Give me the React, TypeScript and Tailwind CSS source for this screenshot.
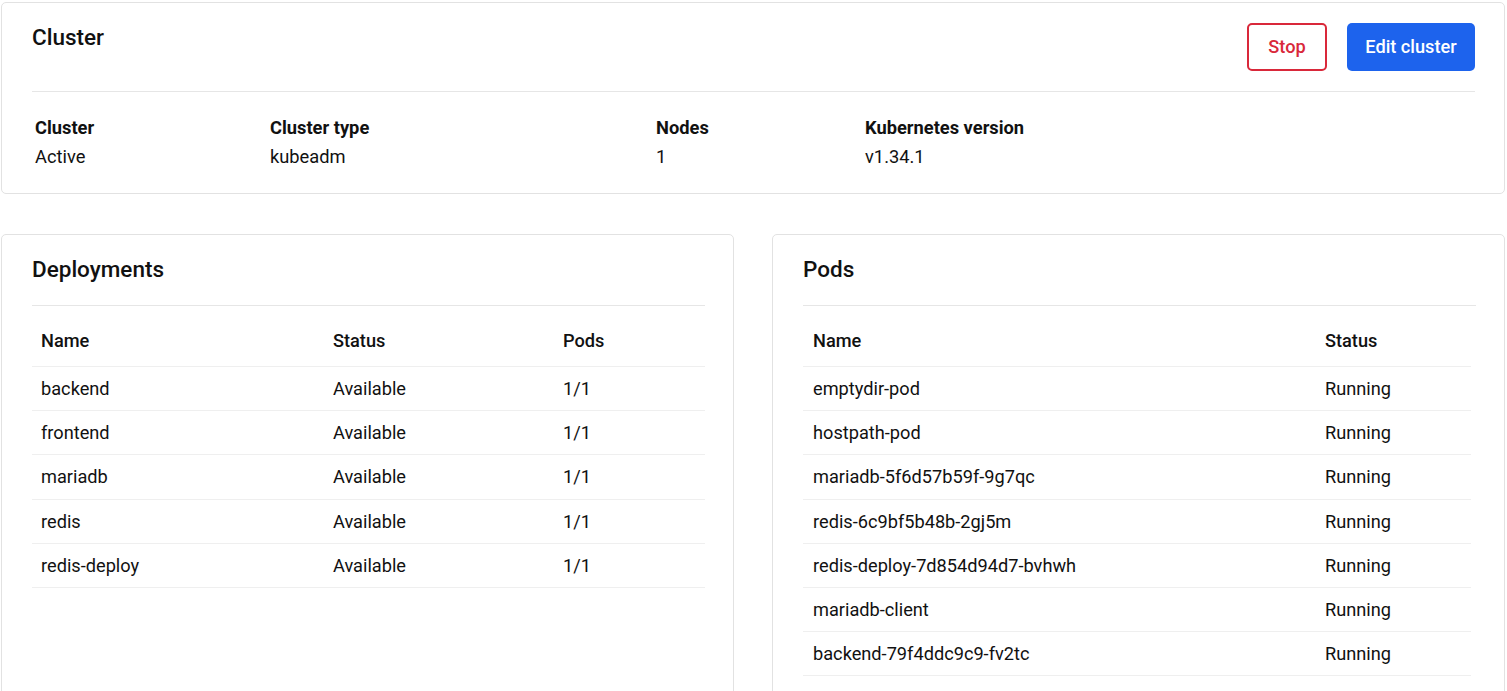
import React from "react";

const deployments = [
  ["backend", "Available", "1/1"],
  ["frontend", "Available", "1/1"],
  ["mariadb", "Available", "1/1"],
  ["redis", "Available", "1/1"],
  ["redis-deploy", "Available", "1/1"],
];

const pods = [
  "emptydir-pod",
  "hostpath-pod",
  "mariadb-5f6d57b59f-9g7qc",
  "redis-6c9bf5b48b-2gj5m",
  "redis-deploy-7d854d94d7-bvhwh",
  "mariadb-client",
  "backend-79f4ddc9c9-fv2tc",
];

export default function App() {
  return (
    <div
      className="h-[691px] w-[1507px] overflow-hidden bg-white text-[#111] pl-px pt-[2px]"
      style={{ fontFamily: "Roboto, 'Noto Sans', Arial, sans-serif" }}
    >
      <div className="w-[1504px] flex flex-col">
        {/* Cluster card */}
        <div className="border border-[#e2e2e2] rounded-[5px] pl-[30px] pr-[29px]">
          <div className="flex justify-between items-start pt-[20px] pb-[20px] border-b border-[#e6e6e6]">
            <h1 className="text-[22.5px] leading-[30px] font-medium -mt-px">Cluster</h1>
            <div className="flex gap-[20px]">
              <button className="h-[48px] w-[80px] pb-[1px] rounded-[5px] border-2 border-[#d9283a] text-[#d9283a] text-[18.2px] font-medium bg-white">
                Stop
              </button>
              <button className="h-[48px] w-[128px] pb-[1px] rounded-[5px] bg-[#1d63ed] text-white text-[18.2px] font-medium">
                Edit cluster
              </button>
            </div>
          </div>
          <div className="grid grid-cols-[235px_386px_209px_1fr] pt-[22px] pb-[22px] text-[18.3px] leading-[28px]">
            {[
              ["Cluster", "Active"],
              ["Cluster type", "kubeadm"],
              ["Nodes", "1"],
              ["Kubernetes version", "v1.34.1"],
            ].map(([k, v]) => (
              <div key={k} className="pl-[3px] flex flex-col">
                <span className="font-bold">{k}</span>
                <span className="mt-[1px]">{v}</span>
              </div>
            ))}
          </div>
        </div>

        {/* Bottom cards */}
        <div className="grid grid-cols-[733px_733px] gap-[38px] mt-[40px]">
          <div className="border border-[#e2e2e2] rounded-[5px] pl-[30px] pr-[28px] pb-[30px] h-[480px]">
            <div className="pt-[19px] pb-[21px] border-b border-[#e6e6e6]">
              <h2 className="text-[22.5px] leading-[30px] font-medium">Deployments</h2>
            </div>
            <div className="text-[18.2px] leading-[27.15px]">
              <div className="grid grid-cols-[291px_230px_1fr] font-medium pt-[21px] pb-[12px] border-b border-[#efefef]">
                <div className="pl-[9px]">Name</div>
                <div className="pl-[10px]">Status</div>
                <div className="pl-[10px]">Pods</div>
              </div>
              {deployments.map(([n, s, p]) => (
                <div key={n} className="grid grid-cols-[291px_230px_1fr] pt-[8px] pb-[8px] border-b border-[#efefef]">
                  <div className="pl-[9px]">{n}</div>
                  <div className="pl-[10px]">{s}</div>
                  <div className="pl-[10px]">{p}</div>
                </div>
              ))}
            </div>
          </div>

          <div className="border border-[#e2e2e2] rounded-[5px] pl-[30px] pr-[28px] pb-[30px] h-[480px]">
            <div className="pt-[19px] pb-[21px] border-b border-[#e6e6e6]">
              <h2 className="text-[22.5px] leading-[30px] font-medium">Pods</h2>
            </div>
            <div className="text-[18.2px] leading-[27.15px] mr-[5px]">
              <div className="grid grid-cols-[512px_1fr] font-medium pt-[21px] pb-[12px] border-b border-[#efefef]">
                <div className="pl-[10px]">Name</div>
                <div className="pl-[10px]">Status</div>
              </div>
              {pods.map((n) => (
                <div key={n} className="grid grid-cols-[512px_1fr] pt-[8px] pb-[8px] border-b border-[#efefef]">
                  <div className="pl-[10px]">{n}</div>
                  <div className="pl-[10px]">Running</div>
                </div>
              ))}
            </div>
          </div>
        </div>
      </div>
    </div>
  );
}
